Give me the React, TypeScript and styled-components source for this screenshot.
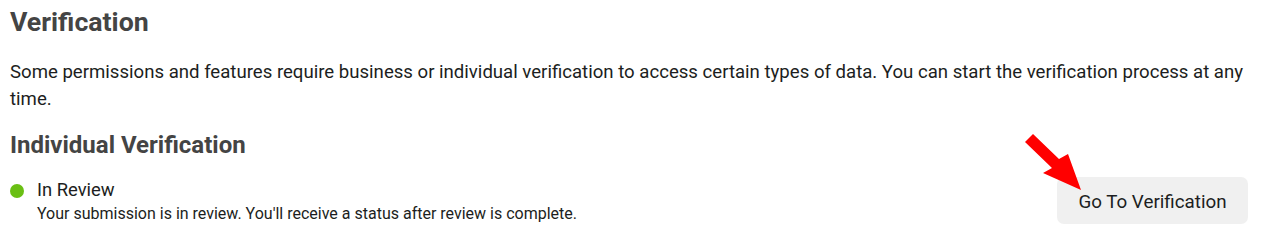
import React from 'react';
import styled, { createGlobalStyle } from 'styled-components';

const GlobalStyle = createGlobalStyle`
  body {
    margin: 0;
    background: #ffffff;
    font-family: Roboto, "Liberation Sans", Arial, sans-serif;
  }
`;

const Page = styled.div`
  padding: 6px 13px 0 10px;
`;

const Title = styled.h1`
  font-size: 26.7px;
  line-height: 32px;
  font-weight: 700;
  color: #444444;
  margin: 0 0 21px;
`;

const Description = styled.p`
  font-size: 18.6px;
  line-height: 27px;
  color: #1c1e21;
  margin: 0 0 18px;
`;

const SubTitle = styled.h2`
  font-size: 24px;
  line-height: 28px;
  font-weight: 700;
  color: #444444;
  margin: 0 0 19px;
`;

const StatusRow = styled.div`
  display: flex;
  justify-content: space-between;
  align-items: flex-start;
`;

const StatusInfo = styled.div`
  display: grid;
  grid-template-columns: 27px 1fr;
  align-items: center;
`;

const Dot = styled.span<{ $color: string }>`
  width: 14px;
  height: 14px;
  border-radius: 50%;
  background: ${({ $color }) => $color};
  margin-top: 1px;
`;

const StatusLabel = styled.span`
  font-size: 18.4px;
  line-height: 24px;
  color: #1c1e21;
`;

const StatusNote = styled.span`
  grid-column: 2;
  font-size: 16px;
  line-height: 24px;
  color: #1c1e21;
`;

const ActionWrap = styled.div`
  position: relative;
  margin-top: -1px;
`;

const ActionButton = styled.button`
  width: 191px;
  height: 47px;
  padding: 3px 0 0;
  border: none;
  border-radius: 7px;
  background: #f0f0f0;
  font-family: Roboto, "Liberation Sans", Arial, sans-serif;
  font-size: 18.8px;
  color: #1c1e21;
  cursor: pointer;
`;

const Pointer = styled.svg`
  position: absolute;
  left: -35px;
  top: -45px;
  width: 62px;
  height: 62px;
  pointer-events: none;
`;

export default function App() {
  return (
    <>
      <GlobalStyle />
      <Page>
        <Title>Verification</Title>
        <Description>
          Some permissions and features require business or individual verification to access certain types of data. You can start the verification process at any time.
        </Description>
        <SubTitle>Individual Verification</SubTitle>
        <StatusRow>
          <StatusInfo>
            <Dot $color="#6abf14" />
            <StatusLabel>In Review</StatusLabel>
            <StatusNote>Your submission is in review. You'll receive a status after review is complete.</StatusNote>
          </StatusInfo>
          <ActionWrap>
            <ActionButton>Go To Verification</ActionButton>
            <Pointer viewBox="0 0 62 62">
              <polygon points="11,2 37,27 46,22 59,58 21,41 30,36 3,10" fill="#ff0000" />
            </Pointer>
          </ActionWrap>
        </StatusRow>
      </Page>
    </>
  );
}
